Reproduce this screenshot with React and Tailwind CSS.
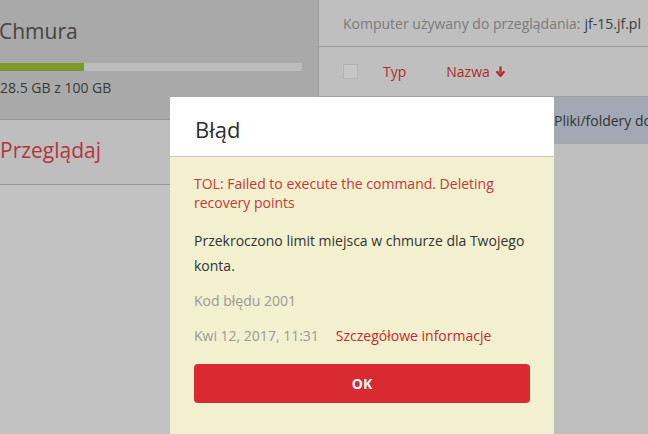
import { useState } from 'react';

function DownArrow() {
  return (
    <svg width="9" height="11" viewBox="0 0 9 11" className="inline-block ml-1.5">
      <path d="M4.5 0.5v7" stroke="#b02a2c" strokeWidth="2.2" fill="none" />
      <path d="M0.6 5.2l3.9 4.8 3.9-4.8" stroke="#b02a2c" strokeWidth="2.2" fill="none" strokeLinejoin="miter" />
    </svg>
  );
}

function Sidebar() {
  return (
    <aside className="w-[319px] shrink-0 border-r border-[#9c9c9c] bg-[#c2c2c2] flex flex-col">
      <div className="h-[120px] bg-[#a9a9a9] border-b border-[#979797]">
        <div className="pt-[16px] text-[21px] leading-[30px] text-[#444] -ml-[1px]">Chmura</div>
        <div className="mt-[17px] h-[8px] w-[302px] bg-[#bcbcbc]">
          <div className="h-full w-[84px] bg-[#7b9a27]" />
        </div>
        <div className="mt-[7px] text-[14px] leading-[20px] text-[#3a3a3a]">28.5 GB z 100 GB</div>
      </div>
      <div className="h-[65px] bg-[#bebebe] border-b border-[#979797] flex items-center">
        <span className="text-[21px] text-[#b3353a] -mt-[2px]">Przeglądaj</span>
      </div>
    </aside>
  );
}

function FileList() {
  return (
    <main className="flex-1 min-w-0 flex flex-col bg-[#bfbfbf]">
      <div className="h-[47px] border-b border-[#9d9d9d] flex items-center pl-[24px] text-[14px]">
        <span className="text-[#7b7b7b]">Komputer używany do przeglądania:</span>
        <span className="ml-[4px] text-[#3c3c3c]">jf-15.jf.pl</span>
      </div>
      <div className="h-[50px] border-b border-[#a3a3a3] flex items-center pl-[24px] text-[14px] text-[#b02a2c]">
        <span className="w-[15px] h-[15px] bg-[#c6c6c6] border border-[#b3b3b3]" />
        <span className="ml-[25px]">Typ</span>
        <span className="ml-[40px] flex items-center">Nazwa<DownArrow /></span>
      </div>
      <div className="h-[47px] bg-[#a2a8b4] border-b border-[#a7a7a7] flex items-center pl-[235px] text-[14px] text-[#333] whitespace-nowrap overflow-hidden">
        Pliki/foldery do przywrócenia
      </div>
    </main>
  );
}

function ErrorDialog({ onClose }) {
  return (
    <div className="absolute left-[170px] top-[97px] w-[384px] h-[360px] flex flex-col">
      <div className="h-[60px] bg-white border-b border-[#c9c9c9] flex items-center px-[25px]">
        <h2 className="text-[22px] text-[#2e2e2e] mt-[5px]">Błąd</h2>
      </div>
      <div className="flex-1 bg-[#f2f0cf] px-[24px] pt-[17px]">
        <p className="text-[14px] leading-[19px] text-[#c6373a]">
          TOL: Failed to execute the command. Deleting recovery points
        </p>
        <p className="mt-[16px] text-[14px] leading-[25px] text-[#333]">
          Przekroczono limit miejsca w chmurze dla Twojego konta.
        </p>
        <p className="mt-[13px] text-[14px] leading-[20px] text-[#999]">Kod błędu 2001</p>
        <div className="mt-[15px] flex text-[14px] leading-[20px]">
          <span className="text-[#999]">Kwi 12, 2017, 11:31</span>
          <a className="ml-[17px] text-[#c32b2e] cursor-pointer">Szczegółowe informacje</a>
        </div>
        <button
          onClick={onClose}
          className="mt-[18px] w-[336px] h-[39px] rounded-[4px] bg-[#d92a32] text-white text-[14px] font-bold"
        >
          OK
        </button>
      </div>
    </div>
  );
}

export default function App() {
  const [open, setOpen] = useState(true);

  return (
    <div
      className="relative w-[648px] h-[434px] overflow-hidden flex bg-[#c2c2c2]"
      style={{ fontFamily: '"Open Sans", "Noto Sans", sans-serif' }}
    >
      <Sidebar />
      <FileList />
      {open && <ErrorDialog onClose={() => setOpen(false)} />}
    </div>
  );
}
